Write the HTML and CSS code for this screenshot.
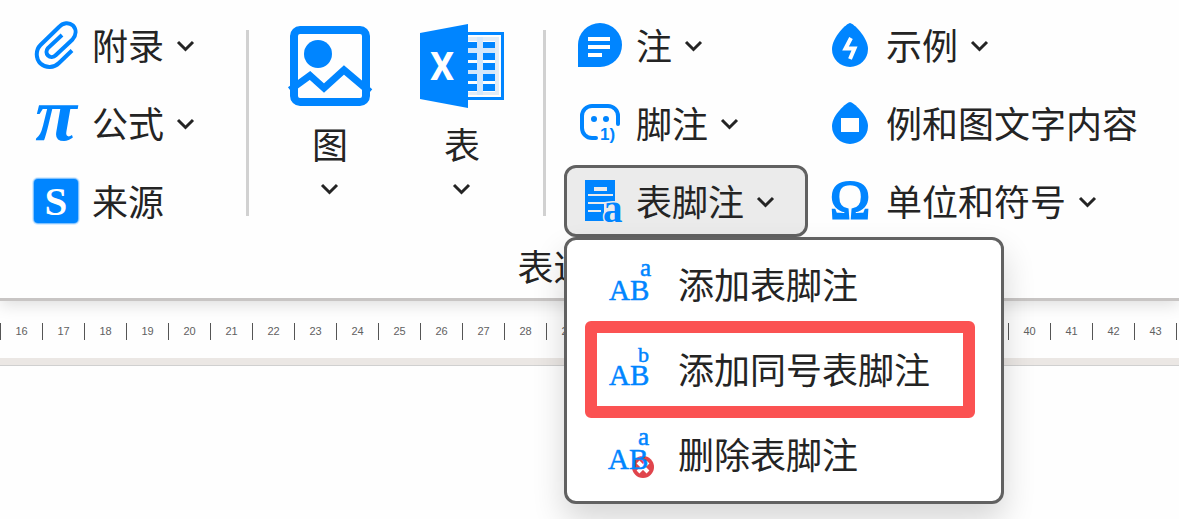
FILE: index.html
```html
<!DOCTYPE html>
<html lang="zh-CN">
	<head>
		<meta charset="UTF-8" />
		<meta name="viewport" content="width=device-width, initial-scale=1.0" />
		<title>表脚注</title>
		<link rel="stylesheet" href="styles.css">
	</head>
	<body>
		<svg class="defs" aria-hidden="true">
			<symbol id="chevron" viewBox="0 0 20 20">
				<path d="M2 7l7.5 7.5L17 7" fill="none" stroke="#242424" stroke-width="3" />
			</symbol>
		</svg>

		<header class="ribbon">
			<div class="groups">
				<div class="column">
					<button class="tool" type="button">
						<svg class="icon" viewBox="0 0 48 48">
							<path class="line" d="M40 29.5L27 42C22 47 14 47.5 8.5 42.5C3.5 37.5 3.5 29 8.5 24L27 6C31 1.5 37 1 41 4.5C44.5 8.5 44.5 14 40.5 18.5L24 34C21.5 36.5 18 36.5 16 34.5C14 32.5 14 29.5 16 27L30 14" />
						</svg>
						<span>附录</span>
						<svg class="chevron"><use href="#chevron" /></svg>
					</button>
					<button class="tool" type="button">
						<svg class="icon" viewBox="0 0 48 48">
							<text class="serif bold italic" x="24" y="41" font-size="76" text-anchor="middle">π</text>
						</svg>
						<span>公式</span>
						<svg class="chevron"><use href="#chevron" /></svg>
					</button>
					<button class="tool" type="button">
						<svg class="icon" viewBox="0 0 48 48">
							<rect x="0" y="0" width="48" height="48" rx="6" opacity=".15" />
							<rect x="1" y="1" width="46" height="46" rx="5" opacity=".4" />
							<rect x="2" y="2" width="44" height="44" rx="4" />
							<text class="serif bold white" x="24" y="38" font-size="41" text-anchor="middle">S</text>
						</svg>
						<span>来源</span>
					</button>
				</div>

				<div class="separator"></div>

				<div class="big-tools">
					<button class="big-tool" type="button">
						<svg class="big-icon" viewBox="0 0 84 84">
							<rect class="frame" x="6" y="6" width="72" height="72" rx="6" />
							<circle cx="30" cy="30" r="14" />
							<path class="hills" d="M2 66L22 51.5L36 64L56 46L82 68" />
						</svg>
						<span>图</span>
						<svg class="chevron"><use href="#chevron" /></svg>
					</button>
					<button class="big-tool" type="button">
						<svg class="big-icon" viewBox="0 0 84 84">
							<path d="M0 9L48 0V84L0 75Z" />
							<path d="M48 8H84V76H48V73H81V11H48Z" />
							<path fill="#e2ecf6" d="M48 13H79V71H48V68H75V17H48Z" />
							<path fill="#d3e7fb" d="M48 24H75V30H48ZM48 46H75V50H48ZM57 13H63V71H57Z" />
							<path d="M48 18h9v6h-9zM63 18h12v6h-12zM48 29h9v7h-9zM63 29h12v7h-12zM48 39h9v7h-9zM63 39h12v7h-12zM48 50h9v7h-9zM63 50h12v7h-12zM48 60h9v7h-9zM63 60h12v7h-12z" />
							<text class="white bold x-mark" x="22" y="56" font-size="38" text-anchor="middle">X</text>
						</svg>
						<span>表</span>
						<svg class="chevron"><use href="#chevron" /></svg>
					</button>
				</div>

				<div class="separator"></div>

				<div class="column notes">
					<button class="tool" type="button">
						<svg class="icon" viewBox="0 0 48 48">
							<path d="M2 46V24A22 22 0 1 1 24 46Z" />
							<path class="white" d="M12 16h22v4H12zM12 24h22v4H12zM12 32h14v4H12z" />
						</svg>
						<span>注</span>
						<svg class="chevron"><use href="#chevron" /></svg>
					</button>
					<button class="tool" type="button">
						<svg class="icon" viewBox="0 0 48 48">
							<path class="line round" d="M42 25V17A10 10 0 0 0 32 7H16A10 10 0 0 0 6 17V29A10 10 0 0 0 16 39H20" />
							<circle cx="18" cy="20" r="3" />
							<circle cx="30" cy="20" r="3" />
							<text class="sans bold" x="24" y="41" font-size="17">1)</text>
						</svg>
						<span>脚注</span>
						<svg class="chevron"><use href="#chevron" /></svg>
					</button>
					<div class="dropdown">
						<button class="tool active" type="button" aria-haspopup="menu" aria-expanded="true">
							<svg class="icon" viewBox="0 0 48 48">
								<path d="M9 3H39V25H28V44H9Z" />
								<path fill="#ebebeb" d="M18 10h13v4H18zM12 17h25v2H12zM12 25h27v2H12zM12 33h13v2H12z" />
								<text class="serif bold outline" x="27" y="45" font-size="39">a</text>
							</svg>
							<span>表脚注</span>
							<svg class="chevron"><use href="#chevron" /></svg>
						</button>
						<div class="menu" role="menu">
							<button class="menu-item" type="button" role="menuitem">
								<svg class="icon" viewBox="0 0 48 48">
									<text class="serif letters" x="3" y="38" font-size="29">AB</text>
									<text class="serif letters" x="34" y="14" font-size="25">a</text>
								</svg>
								<span>添加表脚注</span>
							</button>
							<button class="menu-item marked" type="button" role="menuitem">
								<svg class="icon" viewBox="0 0 48 48">
									<text class="serif letters" x="3" y="38" font-size="29">AB</text>
									<text class="serif letters" x="32" y="15" font-size="22">b</text>
								</svg>
								<span>添加同号表脚注</span>
							</button>
							<button class="menu-item" type="button" role="menuitem">
								<svg class="icon" viewBox="0 0 48 48">
									<circle cx="37" cy="35" r="11" fill="#e0444c" />
									<path d="M32 30L42 40M42 30L32 40" stroke="#fff" stroke-width="4" />
									<text class="serif letters" x="2" y="37" font-size="29">AB</text>
									<text class="serif letters" x="32" y="13" font-size="25">a</text>
								</svg>
								<span>删除表脚注</span>
							</button>
						</div>
					</div>
				</div>

				<div class="column">
					<button class="tool" type="button">
						<svg class="icon" viewBox="0 0 48 48">
							<path d="M24 2C27 2 42 16 42 28A18 18 0 0 1 6 28C6 16 21 2 24 2Z" />
							<path d="M25 17L19.5 27.5H28.5L24 38" fill="none" stroke="#fff" stroke-width="4" />
						</svg>
						<span>示例</span>
						<svg class="chevron"><use href="#chevron" /></svg>
					</button>
					<button class="tool" type="button">
						<svg class="icon" viewBox="0 0 48 48">
							<path d="M24 3C27 3 42 16 42 27A18 18 0 0 1 6 27C6 16 21 3 24 3Z" />
							<rect class="white" x="15" y="19" width="18" height="14" />
						</svg>
						<span>例和图文字内容</span>
					</button>
					<button class="tool" type="button">
						<svg class="icon" viewBox="0 0 48 48">
							<text class="serif omega" x="24" y="41" font-size="54" text-anchor="middle">Ω</text>
						</svg>
						<span>单位和符号</span>
						<svg class="chevron"><use href="#chevron" /></svg>
					</button>
				</div>
			</div>
			<div class="ribbon-label">表述要素</div>
		</header>

		<div class="ruler">
			<span>16</span><span>17</span><span>18</span><span>19</span><span>20</span>
			<span>21</span><span>22</span><span>23</span><span>24</span><span>25</span>
			<span>26</span><span>27</span><span>28</span><span>29</span><span>30</span>
			<span>31</span><span>32</span><span>33</span><span>34</span><span>35</span>
			<span>36</span><span>37</span><span>38</span><span>39</span><span>40</span>
			<span>41</span><span>42</span><span>43</span><span></span>
		</div>

		<main class="page"></main>
	</body>
</html>
```
FILE: styles.css
```css
* {
	margin: 0;
	padding: 0;
	box-sizing: border-box;
}

body {
	min-height: 100vh;
	display: flex;
	flex-direction: column;
	overflow: hidden;
	background: #fefefe;
	color: #242424;
	font-family: 'Noto Sans CJK SC', sans-serif;
	font-size: 36px;
	line-height: 48px;
	white-space: nowrap;
}

button {
	border: 3px solid transparent;
	background: none;
	color: inherit;
	font: inherit;
	cursor: pointer;
}

/* Ribbon */
.ribbon {
	position: relative;
	z-index: 1;
	padding: 9px 0;
	background: #fefefe;
	border-bottom: 3px solid #c8c5c4;
	box-shadow: 0 3px 16px rgba(0, 0, 0, 0.14);
}

.groups {
	display: flex;
	padding-left: 20px;
}

.column {
	display: flex;
	flex-direction: column;
	align-items: flex-start;
	gap: 6px;
}

.notes {
	margin-right: 6px;
}

.tool {
	display: flex;
	align-items: center;
	gap: 12px;
	height: 72px;
	padding: 0 29px 0 9px;
	border-radius: 12px;
}

.tool span {
	padding-bottom: 2px;
}

.tool.active {
	background: #ebebeb;
	border-color: #616161;
}

.separator {
	width: 3px;
	margin: 21px 15px;
	background: #d1d1d1;
}

.column + .separator {
	margin-left: 18px;
}

.big-tools + .separator {
	margin-right: 18px;
}

.big-tools {
	display: flex;
}

.big-tool {
	display: flex;
	flex-direction: column;
	align-items: center;
	gap: 11px;
	width: 132px;
	padding-top: 12px;
}

.ribbon-label {
	margin-top: 4px;
	text-align: center;
}

/* Icons */
.defs {
	display: none;
}

.icon,
.big-icon {
	flex: none;
	width: 48px;
	height: 48px;
	fill: #0085ff;
	overflow: visible;
}

.big-icon {
	width: 84px;
	height: 84px;
}

.chevron {
	flex: none;
	width: 20px;
	height: 20px;
}

.line,
.frame,
.hills {
	fill: none;
	stroke: #0085ff;
	stroke-width: 4;
}

.frame {
	stroke-width: 8;
}

.hills {
	stroke-width: 7;
}

.round {
	stroke-linecap: round;
}

.white {
	fill: #fff;
}

.serif {
	font-family: 'Liberation Serif', serif;
}

.sans {
	font-family: 'Liberation Sans', sans-serif;
}

.bold {
	font-weight: 700;
}

.italic {
	font-style: italic;
}

.omega {
	stroke: #0085ff;
	stroke-width: 2;
}

.x-mark {
	font-family: Roboto, sans-serif;
}

.outline {
	stroke: #ebebeb;
	stroke-width: 3;
	paint-order: stroke;
}

.letters {
	stroke: #0085ff;
	stroke-width: 0.5;
}

/* Menu */
.dropdown {
	position: relative;
}

.menu {
	position: absolute;
	top: 100%;
	left: 0;
	width: 440px;
	padding: 3px 0;
	background: #fff;
	border: 3px solid #616161;
	border-radius: 12px;
	box-shadow: 0 16px 32px rgba(0, 0, 0, 0.16);
}

.menu-item {
	position: relative;
	display: flex;
	align-items: center;
	gap: 24px;
	width: 100%;
	height: 85px;
	padding-left: 36px;
}

.menu-item span {
	padding-bottom: 6px;
}

.marked::after {
	content: '';
	position: absolute;
	inset: -10px 23px -8px 15px;
	border: 12px solid #fb5252;
	border-radius: 6px;
}

/* Ruler */
.ruler {
	display: flex;
	padding: 22px 0 18px;
	overflow: hidden;
	color: #616161;
	font: 11px/17px 'Liberation Sans', sans-serif;
}

.ruler span {
	flex: none;
	width: 42px;
	border-left: 1px solid #555;
	text-align: center;
}

.page {
	flex: 1;
	border-top: 7px solid #ebe7e4;
	box-shadow: inset 0 1px #d0d0d0;
}
```
